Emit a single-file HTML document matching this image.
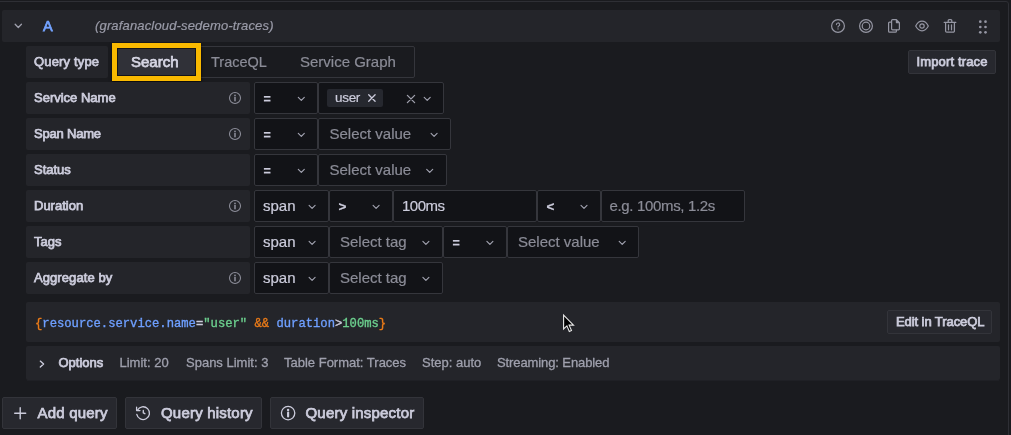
<!DOCTYPE html>
<html><head><meta charset="utf-8"><title>Query editor</title>
<style>
*{box-sizing:border-box;margin:0;padding:0}
html,body{width:1011px;height:435px;overflow:hidden;background:#1a1b1f}
body{position:relative;font-family:"Liberation Sans",sans-serif;color:#ccccdc;font-size:13px}
.abs{position:absolute}
.panelb{position:absolute;left:-4px;top:1px;width:1013px;height:600px;border:1px solid #2e2f35;border-radius:3px}
.hdr{position:absolute;left:2px;top:10px;width:998px;height:32px;background:#24252a;border-radius:2px}
.lbl{position:absolute;left:26px;height:32px;background:#24252a;border-radius:2px;font-size:13px;line-height:32px;padding-left:8px;white-space:nowrap;-webkit-text-stroke:0.75px currentColor;}
.sel{position:absolute;height:32px;background:#121317;border:1px solid #35363c;border-radius:2px}
.t{position:absolute;white-space:nowrap;line-height:20px;-webkit-text-stroke:0.2px currentColor}
.ph{color:#8b8c97}
.s15{font-size:15px}
.btn{position:absolute;background:#27282e;border:1px solid #33343a;border-radius:2px;white-space:nowrap;-webkit-text-stroke:0.75px currentColor;}
svg{position:absolute;overflow:visible}
.mono{font-family:"Liberation Mono",monospace;font-size:12.2px;-webkit-text-stroke:0.35px currentColor}
.opt{font-size:13px;color:#9fa0ad;top:353px;-webkit-text-stroke:0.3px currentColor}
.bb{font-size:15px;top:403px;letter-spacing:0.2px;-webkit-text-stroke:0.75px currentColor;}
</style></head><body>
<div class="panelb"></div>
<div id="wrap" style="position:absolute;left:0;top:0;width:1011px;height:435px;will-change:transform">
<div class="hdr"></div>

<svg style="left:14px;top:23px" width="9" height="6" viewBox="0 0 9 6"><g transform="translate(0.75 0.85)"><path d="M0.4 0.4 L3.55 3.6999999999999997 L6.699999999999999 0.4" fill="none" stroke="#a0a1ae" stroke-width="1.25" stroke-linecap="round" stroke-linejoin="round"/></g></svg>
<span class="t" id="hA" style="left:43px;top:16px;font-size:14.5px;color:#74a3ff;-webkit-text-stroke:0.75px currentColor;">A</span>
<span class="t" id="hds" style="left:95px;top:16px;font-size:13px;font-style:italic;color:#9a9ba8;letter-spacing:0.16px">(grafanacloud-sedemo-traces)</span>
<svg style="left:830px;top:18px" width="16" height="16" viewBox="0 0 16 16"><circle cx="8" cy="8" r="6.4" fill="none" stroke="#9596a3" stroke-width="1.2"/><path d="M6.4 6.6 a1.65 1.65 0 1 1 2.3 1.5 c-0.5 0.25 -0.7 0.5 -0.7 1.0" fill="none" stroke="#9596a3" stroke-width="1.1" stroke-linecap="round"/><circle cx="8" cy="10.9" r="0.7" fill="#9596a3"/></svg>
<svg style="left:858px;top:18px" width="16" height="16" viewBox="0 0 16 16"><circle cx="8" cy="8" r="6.4" fill="none" stroke="#9596a3" stroke-width="1.2"/><circle cx="8" cy="8" r="3.8" fill="none" stroke="#9596a3" stroke-width="1.2"/></svg>
<svg style="left:886px;top:18px" width="16" height="16" viewBox="0 0 16 16"><path d="M5.4 4.2 H3.6 a1 1 0 0 0 -1 1 V13.2 a1 1 0 0 0 1 1 H9.4 a1 1 0 0 0 1 -1 V12" fill="none" stroke="#9596a3" stroke-width="1.2" stroke-linecap="round"/><path d="M6.6 1.6 H10.4 L13.4 4.6 V10.8 a1 1 0 0 1 -1 1 H6.6 a1 1 0 0 1 -1 -1 V2.6 a1 1 0 0 1 1 -1 Z M10.4 1.8 V4.6 H13.2" fill="none" stroke="#9596a3" stroke-width="1.2" stroke-linejoin="round"/></svg>
<svg style="left:914px;top:18px" width="16" height="16" viewBox="0 0 16 16"><path d="M1.7 8 C3.3 4.8 5.5 3.2 8 3.2 S12.7 4.8 14.3 8 C12.7 11.2 10.5 12.8 8 12.8 S3.3 11.2 1.7 8 Z" fill="none" stroke="#9596a3" stroke-width="1.2" stroke-linejoin="round"/><circle cx="8" cy="8" r="2.2" fill="none" stroke="#9596a3" stroke-width="1.2"/></svg>
<svg style="left:942px;top:18px" width="16" height="16" viewBox="0 0 16 16"><path d="M2.2 4.4 H13.8 M6.2 4.2 V2.6 a1 1 0 0 1 1 -1 H8.8 a1 1 0 0 1 1 1 V4.2 M3.6 4.6 V13 a1.2 1.2 0 0 0 1.2 1.2 H11.2 a1.2 1.2 0 0 0 1.2 -1.2 V4.6 M6.5 6.8 V11.8 M9.5 6.8 V11.8" fill="none" stroke="#9596a3" stroke-width="1.25" stroke-linecap="round" stroke-linejoin="round"/></svg>
<svg style="left:0;top:0" width="1011" height="60" viewBox="0 0 1011 60"><circle cx="980.3" cy="21.7" r="1.35" fill="#9596a3"/><circle cx="980.3" cy="27.0" r="1.35" fill="#9596a3"/><circle cx="980.3" cy="32.3" r="1.35" fill="#9596a3"/><circle cx="985.5" cy="21.7" r="1.35" fill="#9596a3"/><circle cx="985.5" cy="27.0" r="1.35" fill="#9596a3"/><circle cx="985.5" cy="32.3" r="1.35" fill="#9596a3"/></svg>

<div class="lbl" style="top:46px;width:82px"><span id="l0" style="letter-spacing:0.16px">Query type</span></div>
<div class="abs" style="left:113px;top:46px;width:302px;height:32px;border:1px solid #35363c;border-radius:2px;background:#1a1b1f"></div>
<div class="abs" style="left:112px;top:43px;width:89px;height:38px;background:#f9b900;box-shadow:0 0 1.5px 0.5px rgba(0,0,0,.45),0 2px 3px rgba(0,0,0,.5)"></div>
<div class="abs" style="left:117px;top:48px;width:79px;height:28px;background:#303138;border:1px solid #131418"></div>
<span class="t" id="rb1" style="left:131px;top:52px;font-size:15px;color:#d5d5e3;-webkit-text-stroke:0.75px currentColor;">Search</span>
<span class="t ph" id="rb2" style="left:211px;top:52px;font-size:14.5px">TraceQL</span>
<span class="t ph" id="rb3" style="left:300px;top:52px;font-size:15px">Service Graph</span>
<div class="btn" style="left:908px;top:50px;width:88px;height:24px;font-size:13px;line-height:22px;padding-left:7.5px;letter-spacing:0.14px"><span id="imp">Import trace</span></div>

<div class="lbl" style="top:82px;width:224px"><span id="l1" style="letter-spacing:0px">Service Name</span></div>
<svg style="left:228px;top:91px" width="15" height="15" viewBox="0 0 15 15"><g transform="translate(0.5 0.5)"><circle cx="6.5" cy="6.5" r="5.5" fill="none" stroke="#8e8f9b" stroke-width="1.05"/><circle cx="6.5" cy="3.915" r="0.853" fill="#8e8f9b"/><path d="M6.5 6.060 V9.250" stroke="#8e8f9b" stroke-width="1.522" stroke-linecap="round"/></g></svg>
<div class="lbl" style="top:118px;width:224px"><span id="l2" style="letter-spacing:-0.2px">Span Name</span></div>
<svg style="left:228px;top:127px" width="15" height="15" viewBox="0 0 15 15"><g transform="translate(0.5 0.5)"><circle cx="6.5" cy="6.5" r="5.5" fill="none" stroke="#8e8f9b" stroke-width="1.05"/><circle cx="6.5" cy="3.915" r="0.853" fill="#8e8f9b"/><path d="M6.5 6.060 V9.250" stroke="#8e8f9b" stroke-width="1.522" stroke-linecap="round"/></g></svg>
<div class="lbl" style="top:154px;width:224px"><span id="l3" style="letter-spacing:0px">Status</span></div>
<div class="lbl" style="top:190px;width:224px"><span id="l4" style="letter-spacing:0px">Duration</span></div>
<svg style="left:228px;top:199px" width="15" height="15" viewBox="0 0 15 15"><g transform="translate(0.5 0.5)"><circle cx="6.5" cy="6.5" r="5.5" fill="none" stroke="#8e8f9b" stroke-width="1.05"/><circle cx="6.5" cy="3.915" r="0.853" fill="#8e8f9b"/><path d="M6.5 6.060 V9.250" stroke="#8e8f9b" stroke-width="1.522" stroke-linecap="round"/></g></svg>
<div class="lbl" style="top:226px;width:224px"><span id="l5" style="letter-spacing:0px">Tags</span></div>
<div class="lbl" style="top:262px;width:224px"><span id="l6" style="letter-spacing:0.08px">Aggregate by</span></div>
<svg style="left:228px;top:271px" width="15" height="15" viewBox="0 0 15 15"><g transform="translate(0.5 0.5)"><circle cx="6.5" cy="6.5" r="5.5" fill="none" stroke="#8e8f9b" stroke-width="1.05"/><circle cx="6.5" cy="3.915" r="0.853" fill="#8e8f9b"/><path d="M6.5 6.060 V9.250" stroke="#8e8f9b" stroke-width="1.522" stroke-linecap="round"/></g></svg>
<div class="sel" style="left:254px;top:82px;width:64px"></div>
<div class="sel" style="left:318px;top:82px;width:126px"></div>
<span class="t" id=e1 style="left:263.6px;top:89.3px;font-size:12.5px;font-weight:bold">=</span>
<svg style="left:297px;top:97px" width="9" height="5" viewBox="0 0 9 5"><g transform="translate(0.9 0.05)"><path d="M0.4 0.4 L3.4 3.3000000000000003 L6.3999999999999995 0.4" fill="none" stroke="#a2a3b1" stroke-width="1.15" stroke-linecap="round" stroke-linejoin="round"/></g></svg>
<div class="abs" style="left:327px;top:89px;width:56px;height:18px;background:#26282f;border-radius:2px"></div>
<span class="t" id="usr" style="left:335px;top:87.5px;font-size:13.5px;letter-spacing:-0.3px">user</span>
<svg style="left:368px;top:94px" width="9" height="9" viewBox="0 0 9 9"><g transform="translate(0.3 0.4)"><path d="M0.4 0.4 L6.8 6.8 M6.8 0.4 L0.4 6.8" fill="none" stroke="#ccccdc" stroke-width="1.3" stroke-linecap="round"/></g></svg>
<svg style="left:407px;top:95px" width="9" height="9" viewBox="0 0 9 9"><g transform="translate(0.0 0.0)"><path d="M0.4 0.4 L7.6 7.6 M7.6 0.4 L0.4 7.6" fill="none" stroke="#a0a1ae" stroke-width="1.3" stroke-linecap="round"/></g></svg>
<svg style="left:423px;top:97px" width="9" height="5" viewBox="0 0 9 5"><g transform="translate(0.8 0.05)"><path d="M0.4 0.4 L3.4 3.3000000000000003 L6.3999999999999995 0.4" fill="none" stroke="#a2a3b1" stroke-width="1.15" stroke-linecap="round" stroke-linejoin="round"/></g></svg>
<div class="sel" style="left:254px;top:118px;width:64px"></div>
<div class="sel" style="left:318px;top:118px;width:133px"></div>
<span class="t"  style="left:263.6px;top:125.3px;font-size:12.5px;font-weight:bold">=</span>
<svg style="left:297px;top:133px" width="9" height="5" viewBox="0 0 9 5"><g transform="translate(0.9 0.05)"><path d="M0.4 0.4 L3.4 3.3000000000000003 L6.3999999999999995 0.4" fill="none" stroke="#a2a3b1" stroke-width="1.15" stroke-linecap="round" stroke-linejoin="round"/></g></svg>
<span class="t s15 ph" id=sv1 style="left:329.5px;top:124px;">Select value</span>
<svg style="left:430px;top:133px" width="9" height="5" viewBox="0 0 9 5"><g transform="translate(0.7 0.05)"><path d="M0.4 0.4 L3.4 3.3000000000000003 L6.3999999999999995 0.4" fill="none" stroke="#a2a3b1" stroke-width="1.15" stroke-linecap="round" stroke-linejoin="round"/></g></svg>
<div class="sel" style="left:254px;top:154px;width:64px"></div>
<div class="sel" style="left:318px;top:154px;width:129px"></div>
<span class="t"  style="left:263.6px;top:161.3px;font-size:12.5px;font-weight:bold">=</span>
<svg style="left:297px;top:169px" width="9" height="5" viewBox="0 0 9 5"><g transform="translate(0.9 0.05)"><path d="M0.4 0.4 L3.4 3.3000000000000003 L6.3999999999999995 0.4" fill="none" stroke="#a2a3b1" stroke-width="1.15" stroke-linecap="round" stroke-linejoin="round"/></g></svg>
<span class="t s15 ph" id=sv2 style="left:329.5px;top:160px;">Select value</span>
<svg style="left:426px;top:169px" width="9" height="5" viewBox="0 0 9 5"><g transform="translate(0.3 0.05)"><path d="M0.4 0.4 L3.4 3.3000000000000003 L6.3999999999999995 0.4" fill="none" stroke="#a2a3b1" stroke-width="1.15" stroke-linecap="round" stroke-linejoin="round"/></g></svg>
<div class="sel" style="left:254px;top:190px;width:75px"></div>
<div class="sel" style="left:329px;top:190px;width:64px"></div>
<div class="sel" style="left:393px;top:190px;width:144px"></div>
<div class="sel" style="left:537px;top:190px;width:64px"></div>
<div class="sel" style="left:601px;top:190px;width:144px"></div>
<span class="t s15 " id=sp1 style="left:263px;top:196px;">span</span>
<svg style="left:308px;top:205px" width="9" height="5" viewBox="0 0 9 5"><g transform="translate(0.7 0.05)"><path d="M0.4 0.4 L3.4 3.3000000000000003 L6.3999999999999995 0.4" fill="none" stroke="#a2a3b1" stroke-width="1.15" stroke-linecap="round" stroke-linejoin="round"/></g></svg>
<span class="t" id="gt" style="left:338.4px;top:197.2px;font-size:13.5px;font-weight:bold">&gt;</span>
<svg style="left:372px;top:205px" width="9" height="5" viewBox="0 0 9 5"><g transform="translate(0.7 0.05)"><path d="M0.4 0.4 L3.4 3.3000000000000003 L6.3999999999999995 0.4" fill="none" stroke="#a2a3b1" stroke-width="1.15" stroke-linecap="round" stroke-linejoin="round"/></g></svg>
<span class="t s15 " id=ms style="left:402px;top:196px;letter-spacing:-0.5px">100ms</span>
<span class="t" id="lt" style="left:546.4px;top:197.2px;font-size:13.5px;font-weight:bold">&lt;</span>
<svg style="left:580px;top:205px" width="9" height="5" viewBox="0 0 9 5"><g transform="translate(0.6 0.05)"><path d="M0.4 0.4 L3.4 3.3000000000000003 L6.3999999999999995 0.4" fill="none" stroke="#a2a3b1" stroke-width="1.15" stroke-linecap="round" stroke-linejoin="round"/></g></svg>
<span class="t s15 ph" id=eg style="left:609.5px;top:196px;letter-spacing:-0.34px">e.g. 100ms, 1.2s</span>
<div class="sel" style="left:254px;top:226px;width:75px"></div>
<div class="sel" style="left:329px;top:226px;width:114px"></div>
<div class="sel" style="left:443px;top:226px;width:64px"></div>
<div class="sel" style="left:507px;top:226px;width:132px"></div>
<span class="t s15 "  style="left:263px;top:232px;">span</span>
<svg style="left:308px;top:241px" width="9" height="5" viewBox="0 0 9 5"><g transform="translate(0.7 0.05)"><path d="M0.4 0.4 L3.4 3.3000000000000003 L6.3999999999999995 0.4" fill="none" stroke="#a2a3b1" stroke-width="1.15" stroke-linecap="round" stroke-linejoin="round"/></g></svg>
<span class="t s15 ph" id=st1 style="left:340px;top:232px;">Select tag</span>
<svg style="left:422px;top:241px" width="9" height="5" viewBox="0 0 9 5"><g transform="translate(0.5 0.05)"><path d="M0.4 0.4 L3.4 3.3000000000000003 L6.3999999999999995 0.4" fill="none" stroke="#a2a3b1" stroke-width="1.15" stroke-linecap="round" stroke-linejoin="round"/></g></svg>
<span class="t"  style="left:452.6px;top:233.3px;font-size:12.5px;font-weight:bold">=</span>
<svg style="left:486px;top:241px" width="9" height="5" viewBox="0 0 9 5"><g transform="translate(0.5 0.05)"><path d="M0.4 0.4 L3.4 3.3000000000000003 L6.3999999999999995 0.4" fill="none" stroke="#a2a3b1" stroke-width="1.15" stroke-linecap="round" stroke-linejoin="round"/></g></svg>
<span class="t s15 ph" id=sv3 style="left:518px;top:232px;">Select value</span>
<svg style="left:618px;top:241px" width="9" height="5" viewBox="0 0 9 5"><g transform="translate(0.8 0.05)"><path d="M0.4 0.4 L3.4 3.3000000000000003 L6.3999999999999995 0.4" fill="none" stroke="#a2a3b1" stroke-width="1.15" stroke-linecap="round" stroke-linejoin="round"/></g></svg>
<div class="sel" style="left:254px;top:262px;width:75px"></div>
<div class="sel" style="left:329px;top:262px;width:114px"></div>
<span class="t s15 "  style="left:263px;top:268px;">span</span>
<svg style="left:308px;top:277px" width="9" height="5" viewBox="0 0 9 5"><g transform="translate(0.7 0.05)"><path d="M0.4 0.4 L3.4 3.3000000000000003 L6.3999999999999995 0.4" fill="none" stroke="#a2a3b1" stroke-width="1.15" stroke-linecap="round" stroke-linejoin="round"/></g></svg>
<span class="t s15 ph" id=st2 style="left:340px;top:268px;">Select tag</span>
<svg style="left:422px;top:277px" width="9" height="5" viewBox="0 0 9 5"><g transform="translate(0.5 0.05)"><path d="M0.4 0.4 L3.4 3.3000000000000003 L6.3999999999999995 0.4" fill="none" stroke="#a2a3b1" stroke-width="1.15" stroke-linecap="round" stroke-linejoin="round"/></g></svg>

<div class="abs" style="left:26px;top:302px;width:974px;height:40px;background:#24252a;border-radius:2px"></div>
<span class="t mono" id="q" style="left:35px;top:314px"><span style="color:#eb7b18">{</span><span style="color:#6e9fff">resource.service.name</span><span style="color:#ccccdc">=</span><span style="color:#6ccf8e">"user"</span> <span style="color:#eb7b18">&amp;&amp;</span> <span style="color:#6e9fff">duration</span><span style="color:#ccccdc">&gt;</span><span style="color:#6ccf8e">100ms</span><span style="color:#eb7b18">}</span></span>
<div class="btn" style="left:887px;top:310px;width:105px;height:24px;font-size:13px;line-height:22px;padding-left:8px;letter-spacing:-0.08px"><span id="edt">Edit in TraceQL</span></div>
<div class="abs" style="left:26px;top:346px;width:974px;height:34px;background:#24252a;border-radius:2px"></div><div class="abs" style="left:27px;top:380px;width:972px;height:1px;background:#1f2025"></div>

<svg style="left:39px;top:360px" width="7" height="9" viewBox="0 0 7 9"><g transform="translate(0.7 0.5)"><path d="M0.6 0.6 L3.9 3.6 L0.6 6.6" fill="none" stroke="#ccccdc" stroke-width="1.35" stroke-linecap="round" stroke-linejoin="round"/></g></svg>

<span class="t" id="o0" style="left:58.5px;top:353px;font-size:13px;-webkit-text-stroke:0.75px currentColor;">Options</span>
<span class="t opt" id="o1" style="left:119.5px">Limit: 20</span>
<span class="t opt" id="o2" style="left:186px">Spans Limit: 3</span>
<span class="t opt" id="o3" style="left:284px">Table Format: Traces</span>
<span class="t opt" id="o4" style="left:422px">Step: auto</span>
<span class="t opt" id="o5" style="left:497px;letter-spacing:-0.1px">Streaming: Enabled</span>
<div class="btn" style="left:2px;top:397px;width:115px;height:32px"></div>
<div class="btn" style="left:125px;top:397px;width:137px;height:32px"></div>
<div class="btn" style="left:270px;top:397px;width:154px;height:32px"></div>
<span class="t bb" id="b1" style="left:37.5px">Add query</span>
<span class="t bb" id="b2" style="left:161px">Query history</span>
<span class="t bb" id="b3" style="left:305.5px">Query inspector</span>
<svg style="left:14px;top:407px" width="12" height="12" viewBox="0 0 12 12"><path d="M6.2 0.7 V11.7 M0.7 6.2 H11.7" stroke="#ccccdc" stroke-width="1.4" stroke-linecap="round"/></svg>

<svg style="left:135px;top:405px" width="16" height="16" viewBox="0 0 16 16"><path d="M2.4 5.2 A6.4 6.4 0 1 1 1.8 9.4" fill="none" stroke="#ccccdc" stroke-width="1.3" stroke-linecap="round"/><path d="M1.6 2.2 V5.6 H5" fill="none" stroke="#ccccdc" stroke-width="1.3" stroke-linecap="round" stroke-linejoin="round"/><path d="M8.3 5.4 V7.9 L9.9 8.7" fill="none" stroke="#ccccdc" stroke-width="1.35" stroke-linecap="round" stroke-linejoin="round"/></svg>
<svg style="left:280px;top:405px" width="17" height="17" viewBox="0 0 17 17"><g transform="translate(0.4 0.4)"><circle cx="7.7" cy="7.7" r="6.7" fill="none" stroke="#ccccdc" stroke-width="1.3"/><circle cx="7.7" cy="4.551" r="1.194" fill="#ccccdc"/><path d="M7.7 7.164 V11.050" stroke="#ccccdc" stroke-width="2.168" stroke-linecap="round"/></g></svg>
<svg style="left:560px;top:311px" width="20" height="24" viewBox="0 0 20 24"><path d="M3.6 4.1 V17.9 L6.9 14.9 L9.3 20.5 L11.5 19.5 L9.1 14.1 H13.5 Z" fill="#000" stroke="#e8e8e8" stroke-width="1.1" stroke-linejoin="miter"/></svg>
</div></body></html>
